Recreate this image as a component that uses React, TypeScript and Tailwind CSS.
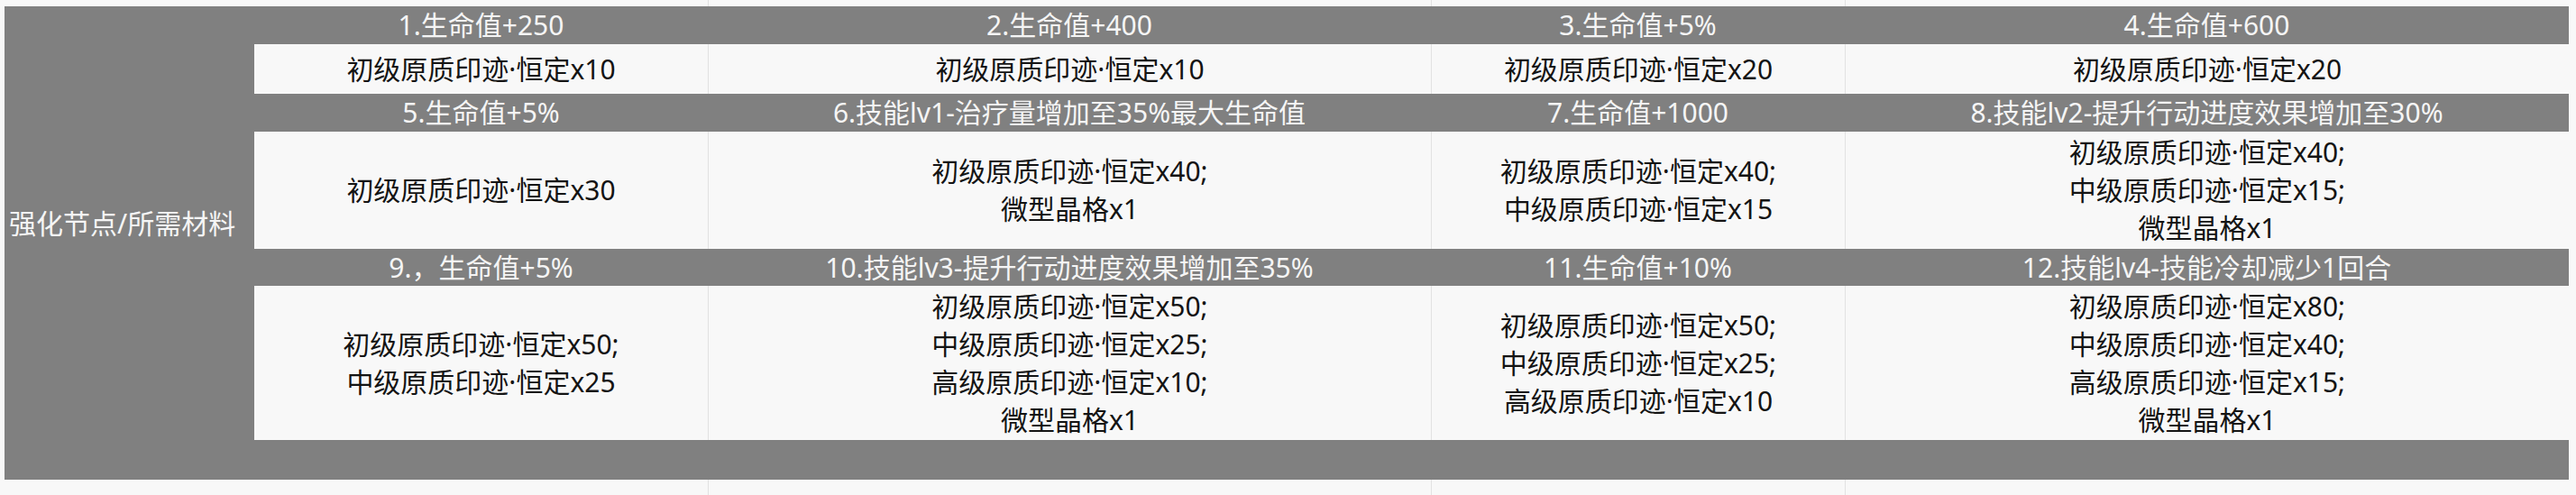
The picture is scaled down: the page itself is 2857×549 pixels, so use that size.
const headers = [
  ["1.生命值+250", "2.生命值+400", "3.生命值+5%", "4.生命值+600"],
  ["5.生命值+5%", "6.技能lv1-治疗量增加至35%最大生命值", "7.生命值+1000", "8.技能lv2-提升行动进度效果增加至30%"],
  ["9.，生命值+5%", "10.技能lv3-提升行动进度效果增加至35%", "11.生命值+10%", "12.技能lv4-技能冷却减少1回合"],
];

const materials = [
  [
    ["初级原质印迹·恒定x10"],
    ["初级原质印迹·恒定x10"],
    ["初级原质印迹·恒定x20"],
    ["初级原质印迹·恒定x20"],
  ],
  [
    ["初级原质印迹·恒定x30"],
    ["初级原质印迹·恒定x40;", "微型晶格x1"],
    ["初级原质印迹·恒定x40;", "中级原质印迹·恒定x15"],
    ["初级原质印迹·恒定x40;", "中级原质印迹·恒定x15;", "微型晶格x1"],
  ],
  [
    ["初级原质印迹·恒定x50;", "中级原质印迹·恒定x25"],
    ["初级原质印迹·恒定x50;", "中级原质印迹·恒定x25;", "高级原质印迹·恒定x10;", "微型晶格x1"],
    ["初级原质印迹·恒定x50;", "中级原质印迹·恒定x25;", "高级原质印迹·恒定x10"],
    ["初级原质印迹·恒定x80;", "中级原质印迹·恒定x40;", "高级原质印迹·恒定x15;", "微型晶格x1"],
  ],
];

const rowStarts = ["row-start-1", "row-start-3", "row-start-5"];
const matRowStarts = ["row-start-2", "row-start-4", "row-start-6"];
const colStarts = ["col-start-2", "col-start-3", "col-start-4", "col-start-5"];

function GridStrip({ height }: { height: string }) {
  return (
    <div className={`grid grid-cols-[277px_503px_802px_459px_803px] ${height}`}>
      <div />
      <div />
      <div className="border-l border-[#e2e2e2]" />
      <div className="border-l border-[#e2e2e2]" />
      <div className="border-l border-[#e2e2e2]" />
    </div>
  );
}

export default function App() {
  return (
    <div className="w-[2857px] h-[549px] bg-[#f8f8f8] pl-[5px] pr-[8px] overflow-hidden font-['Noto_Sans','Noto_Sans_CJK_SC',sans-serif] text-[30px]">
      <GridStrip height="h-[7px]" />
      <div className="grid grid-cols-[277px_503px_802px_459px_803px] grid-rows-[42px_55px_42px_130px_41px_171px_44px] bg-[#808080]">
        <div className="row-start-1 row-end-7 col-start-1 flex items-center pl-[5px] text-[#f5f5f5] leading-[42px]">
          强化节点/所需材料
        </div>
        {headers.map((row, r) =>
          row.map((h, c) => (
            <div
              key={`h${r}${c}`}
              className={`${rowStarts[r]} ${colStarts[c]} flex items-center justify-center text-[#f5f5f5] leading-[42px] whitespace-nowrap`}
            >
              {h}
            </div>
          ))
        )}
        {materials.map((row, r) =>
          row.map((lines, c) => (
            <div
              key={`m${r}${c}`}
              className={`${matRowStarts[r]} ${colStarts[c]} flex flex-col items-center justify-center bg-[#f8f8f8] text-[#141414] leading-[42px] whitespace-nowrap ${c > 0 ? "border-l border-[#e2e2e2]" : ""}`}
            >
              {lines.map((l, i) => (
                <span key={i}>{l}</span>
              ))}
            </div>
          ))
        )}
      </div>
      <GridStrip height="h-[17px]" />
    </div>
  );
}
